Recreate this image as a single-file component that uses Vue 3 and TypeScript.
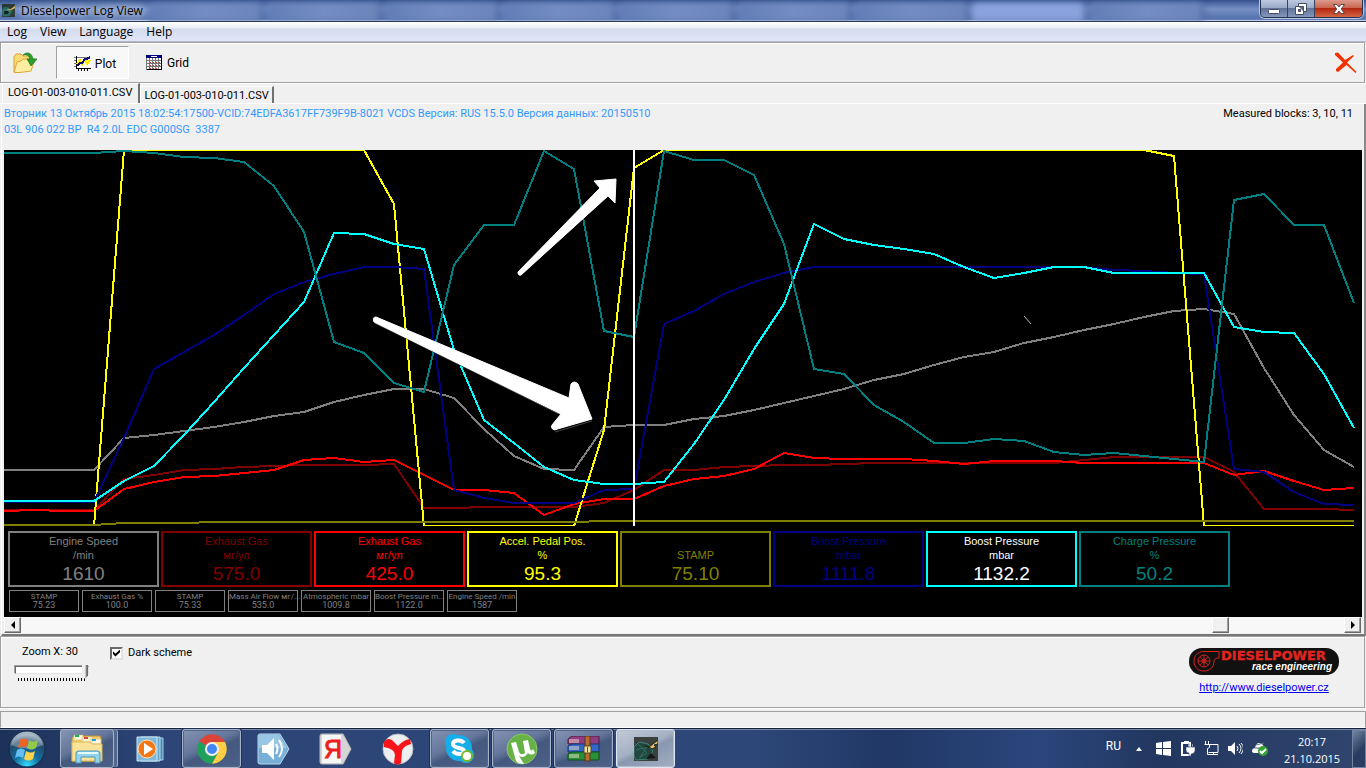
<script setup lang="ts">
import { computed, ref } from 'vue'

interface Series { name: string; color: string; points: number[] }
interface Channel { name: string; unit: string; value: string; color: string; text?: string }

const zoom = ref(30)
const dark = ref(true)
const activeTab = ref(0)
const files = ['LOG-01-003-010-011.CSV', 'LOG-01-003-010-011.CSV']
const menus = ['Log', 'View', 'Language', 'Help']

const fill = (value: number, count: number): number[] => Array.from({ length: count }, () => value)

const series: Series[] = [
  { name: 'engine', color: '#808080', points: [470, 470, 470, 470, 438, 435, 431, 427, 422, 416, 412, 402, 395, 389, 389, 398, 429, 456, 469, 470, 427, 425, 425, 419, 416, 410, 403, 396, 389, 380, 374, 365, 357, 352, 343, 337, 330, 324, 317, 311, 309, 314, 368, 415, 450, 467] },
  { name: 'gas1', color: '#800000', points: [510, 510, 510, 510, 479, 475, 470, 469, 467, 466, 465, 465, 465, 464, 508, 508, 507, 507, 507, 507, 503, 490, 470, 470, 467, 466, 465, 465, 464, 463, 463, 463, 463, 463, 463, 463, 460, 457, 457, 457, 457, 472, 509, 509, 509, 510] },
  { name: 'gas2', color: '#ff0000', points: [511, 510, 511, 511, 489, 482, 477, 476, 473, 470, 460, 458, 462, 460, 475, 490, 490, 493, 515, 504, 499, 499, 486, 479, 476, 469, 453, 458, 459, 459, 459, 461, 464, 461, 461, 461, 463, 463, 463, 463, 463, 475, 471, 481, 490, 488] },
  { name: 'pedal', color: '#ffff00', points: [...fill(526, 4), ...fill(150, 9), 204, ...fill(526, 6), 430, 168, ...fill(150, 17), 156, ...fill(526, 6)] },
  { name: 'stamp', color: '#808000', points: [...fill(525, 4), 523, 523, 523, ...fill(522, 13), ...fill(521, 26)] },
  { name: 'boost1', color: '#000080', points: [502, 502, 502, 502, 438, 369, 352, 335, 315, 294, 282, 274, 267, 267, 269, 490, 498, 503, 503, 503, 490, 489, 324, 311, 294, 282, 273, ...fill(267, 10), 270, 271, 273, 274, 469, 472, 492, 504, 505] },
  { name: 'boost2', color: '#00ffff', points: [501, 501, 501, 501, 481, 466, 435, 402, 368, 335, 302, 233, 234, 244, 249, 350, 420, 443, 467, 480, 484, 484, 482, 444, 400, 349, 304, 224, 239, 245, 249, 254, 267, 278, 273, 267, 267, 273, 273, 273, 273, 327, 332, 333, 374, 428] },
  { name: 'charge', color: '#008080', points: [153, 153, 153, 153, 151, 153, 157, 158, 162, 186, 232, 342, 353, 383, 392, 265, 225, 225, 151, 169, 331, 337, 151, 160, 160, 175, 244, 369, 374, 405, 422, 443, 443, 439, 441, 452, 455, 453, 456, 459, 462, 200, 194, 225, 225, 303] },
]

const lines = computed(() =>
  series.map((s) => ({ ...s, path: s.points.map((y, i) => `${i * zoom.value},${y - 150}`).join(' ') })),
)

const channels: Channel[] = [
  { name: 'Engine Speed', unit: '/min', value: '1610', color: '#808080' },
  { name: 'Exhaust Gas', unit: 'мг/ул', value: '575.0', color: '#800000' },
  { name: 'Exhaust Gas', unit: 'мг/ул', value: '425.0', color: '#ff0000' },
  { name: 'Accel. Pedal Pos.', unit: '%', value: '95.3', color: '#ffff00' },
  { name: '', unit: 'STAMP', value: '75.10', color: '#808000' },
  { name: 'Boost Pressure', unit: 'mbar', value: '1111.8', color: '#000080' },
  { name: 'Boost Pressure', unit: 'mbar', value: '1132.2', color: '#00ffff', text: '#ffffff' },
  { name: 'Charge Pressure', unit: '%', value: '50.2', color: '#008080' },
]

const minor = [
  ['STAMP', '75.23'],
  ['Exhaust Gas %', '100.0'],
  ['STAMP', '75.33'],
  ['Mass Air Flow мг/...', '535.0'],
  ['Atmospheric mbar', '1009.8'],
  ['Boost Pressure m...', '1122.0'],
  ['Engine Speed /min', '1587'],
]
</script>

<template>
  <div class="screen">
    <header class="title">
      <svg class="app-icon" width="13" height="13" viewBox="0 0 24 24">
        <rect width="24" height="24" fill="#2c3836" />
        <path d="M0 10 5 5l9 2 5 7-5 8-12 1-2-4z" fill="#2a6a62" />
        <path d="m10 9 5 1 9-7v5l-5 2-4 2-5-1z" fill="#d2b65a" />
        <path d="M3 12h8l3 4-4 4H3z" fill="#102420" stroke="#4aa08e" />
      </svg>
      <h1>Dieselpower Log View</h1>
      <div class="ghost-tabs"><i></i><i></i><i></i><i></i><i></i><i></i><i></i><i class="lit"></i><i></i></div>
      <div class="controls">
        <button type="button" aria-label="Minimize">
          <svg width="14" height="12" viewBox="0 0 14 12"><rect x="1.500" y="6.500" width="11" height="4" rx="1" fill="#fff" stroke="#454d60" /></svg>
        </button>
        <button type="button" aria-label="Restore">
          <svg width="14" height="14" viewBox="0 0 14 14"><path d="M4.500 1.500h8v8h-3v3h-8v-8h3z" fill="#fff" stroke="#454d60" /><path d="M4.500 4.500h5v5M4.500 7.500h2v2h-2z" fill="#647190" stroke="#454d60" /></svg>
        </button>
        <button type="button" class="close" aria-label="Close">
          <svg width="14" height="12" viewBox="0 0 14 12"><path d="M1.500 1.500h3.500l2 2.500 2-2.500h3.500L9.300 6l3.200 4.500H9L7 8l-2 2.500H1.500L4.700 6z" fill="#fff" stroke="#5a4248" /></svg>
        </button>
      </div>
    </header>

    <nav class="menu"><button v-for="m in menus" :key="m" type="button">{{ m }}</button></nav>

    <div class="toolbar">
      <button type="button" class="open" aria-label="Open log">
        <svg width="24" height="22" viewBox="0 0 24 22">
          <path d="M1 20V4.500L3 2h5l2 2h7l1 2v3" fill="#f8dc75" stroke="#d9a02c" />
          <path d="M1 20.500 4 10l4-1 2-2h12l-4 12-11 1.500z" fill="#ffeea2" stroke="#dca63a" />
          <path d="M10 3c4-4 9-2 10 4h4l-6 7-4-7h3c-1-4-4-5-7-4z" fill="#2b9e2b" stroke="#14761c" stroke-width=".7" />
        </svg>
      </button>
      <button type="button" class="mode pressed">
        <svg width="17" height="17" viewBox="0 0 17 17" shape-rendering="crispEdges">
          <rect x="2" y="1" width="14" height="12" fill="#fff" />
          <path d="M0 2.500h16M0 5.500h3M0 8.500h3M0 11.500h3" stroke="#777" />
          <path d="M2.500 1v12.500H17M4.500 14v2M7.500 14v2M10.500 14v2M13.500 14v2" stroke="#000" fill="none" />
          <path d="m3 9 3-4 2 5 3-6 2 5 3-4" stroke="#ffe900" stroke-width="2" fill="none" />
          <path d="m3 11 3-3h2l3-4h2l3-2" stroke="#111170" stroke-width="2" fill="none" />
        </svg>
        Plot
      </button>
      <button type="button" class="mode">
        <svg width="17" height="16" viewBox="0 0 17 16" shape-rendering="crispEdges">
          <rect width="16" height="15" fill="#fff" /><rect width="16" height="3" fill="#000080" /><path d="M5 1h6" stroke="#fff" />
          <path d="M0 5.500h15M0 8.500h15M0 11.500h15M.500 3v12M3.500 3v12M6.500 3v12M9.500 3v12M12.500 3v12" stroke="#777" />
          <path d="M4 7h11M4 10h11M4 13h8" stroke="#e02020" stroke-dasharray="1 2" /><path d="M15.500 0v14.500H1" fill="none" stroke="#000" />
        </svg>
        Grid
      </button>
      <button type="button" class="delete" aria-label="Close log">
        <svg width="24" height="22" viewBox="0 0 24 22"><path d="m1 1 3-.5 7 7.500 8-5 1 1-7 6.500L22.500 20l-1 1-9-8L4 20l-2-1v-2l7-6.500L1 3z" fill="#f23200" /></svg>
      </button>
    </div>

    <div class="tabs" role="tablist">
      <button v-for="(f, i) in files" :key="i" type="button" role="tab" :aria-selected="activeTab === i" :class="{ active: activeTab === i }" @click="activeTab = i">{{ f }}</button>
    </div>

    <main class="page">
      <div class="info">
        <p>Вторник 13 Октябрь 2015 18:02:54:17500-VCID:74EDFA3617FF739F9B-8021 VCDS Версия: RUS 15.5.0 Версия данных: 20150510<br />03L 906 022 BP&nbsp; R4 2.0L EDC G000SG&nbsp; 3387</p>
        <span>Measured blocks: 3, 10, 11</span>
      </div>

      <section class="plot">
        <svg class="chart" viewBox="0 0 1358 376" preserveAspectRatio="none" role="img" aria-label="Log plot">
          <g fill="none" stroke-width="2" shape-rendering="crispEdges">
            <polyline v-for="l in lines" :key="l.name" :points="l.path" :stroke="l.color" vector-effect="non-scaling-stroke" />
            <path d="M630 0v376" stroke="#fff" />
          </g>
          <g fill="#fff" stroke="#fff" stroke-linejoin="round">
            <path d="m516 125 87-80" fill="none" stroke="#555" stroke-width="2" />
            <path d="m514 122 82-84-6-7 22-2-1 24-7-7-87 79q-3 1-3-3z" />
            <path d="m371 173 186 92M551 282l37-11" fill="none" stroke="#444" />
            <path d="m372 167 193 81 2-14q3-4 7 0l14 35-38 11q-4-2-2-5l9-11-187-92q-2-5 2-5z" />
          </g>
          <path d="m1020 166 7 8" stroke="#bbb" />
        </svg>
        <div class="readouts">
          <div v-for="(c, i) in channels" :key="i" class="readout" :style="{ borderColor: c.color, color: c.text ?? c.color }">
            <span>{{ c.name }}</span><span>{{ c.unit }}</span><strong>{{ c.value }}</strong>
          </div>
        </div>
        <div class="minors">
          <div v-for="(m, i) in minor" :key="i" class="minor"><span>{{ m[0] }}</span><b>{{ m[1] }}</b></div>
        </div>
      </section>

      <div class="scroll">
        <button type="button" aria-label="Scroll left"><svg width="4" height="8" viewBox="0 0 4 8"><path d="M4 0v8L0 4z" /></svg></button>
        <div class="before"></div>
        <button type="button" aria-label="Scroll position"></button>
        <div class="after"></div>
        <button type="button" aria-label="Scroll right"><svg width="4" height="8" viewBox="0 0 4 8"><path d="M0 0v8l4-4z" /></svg></button>
      </div>
    </main>

    <section class="settings">
      <div class="zoom">
        <label for="zoom">Zoom X: {{ zoom }}</label>
        <input id="zoom" v-model.number="zoom" type="range" min="2" max="30" />
        <div class="ticks"></div>
      </div>
      <label class="scheme"><input v-model="dark" type="checkbox" />Dark scheme</label>
      <div class="brand">
        <svg width="150" height="27" viewBox="0 0 150 27">
          <rect width="150" height="27" rx="13" fill="#111" />
          <g fill="none" stroke="#d9211e">
            <circle cx="15" cy="13" r="6" />
            <circle cx="15" cy="13" r="2" />
            <path d="M15 7v12M9 13h12M11 9l8 8M19 9l-8 8" stroke-width=".8" />
            <path d="M30 3.500H15C8 3.500 5 8 5 13c0 6 4 10 10 10s10-4 10-10q0-3 5-3z" />
          </g>
          <text x="32" y="12" class="logo-name">DIESELPOWER</text>
          <text x="143" y="22" text-anchor="end" class="logo-sub">race engineering</text>
        </svg>
        <a href="http://www.dieselpower.cz">http://www.dieselpower.cz</a>
      </div>
    </section>

    <div class="status"></div>

    <footer class="taskbar">
      <button type="button" class="start" aria-label="Start">
        <svg width="38" height="38" viewBox="0 0 38 38">
          <defs><radialGradient id="orb" cx=".5" cy=".95" r=".9"><stop offset="0" stop-color="#35dcff" /><stop offset=".4" stop-color="#126a9c" /><stop offset=".75" stop-color="#244a6a" /><stop offset="1" stop-color="#a6bac9" /></radialGradient></defs>
          <circle cx="19" cy="19" r="18" fill="url(#orb)" stroke="#122744" />
          <path d="M3 15C6 0 32 0 35 15q-16 7-32 0z" fill="#fff" opacity=".3" />
          <path d="M12 10q4-3 8 0l-2 8q-4-3-8 0z" fill="#ef6425" /><path d="M21 10q5 3 9 0l-2 8q-5 3-9 0z" fill="#92c94b" />
          <path d="M9 20q4-3 8 0l-2 8q-4-3-8 0z" fill="#62bff1" /><path d="M18 21q5 3 9 0l-2 8q-5 3-9 0z" fill="#ffd24c" />
        </svg>
      </button>
      <button type="button" class="task open-task stacked" aria-label="Explorer">
        <svg width="34" height="32" viewBox="0 0 34 32">
          <path d="M2 28V5l2-2h26l1 2v23z" fill="#efcf70" stroke="#b99137" />
          <path d="M4 2h9v5H4zM12 4h10v5H12zM20 6h11v5H20z" fill="#fff8dc" stroke="#d4b25c" stroke-width=".5" /><path d="M5 2h4v2H5z" fill="#10b35b" /><path d="M14 4h4v2h-4z" fill="#dc4837" /><path d="M22 6h4v2h-4z" fill="#299edb" />
          <path d="M2 9h18l2 2h10v17H2z" fill="#f8e399" stroke="#dcb957" />
          <path d="M6 30V20q0-2 3-2h18q3 0 3 2v10h-5v-6H11v6z" fill="#91d4ec" stroke="#5298bd" /><path d="M8 20h20" stroke="#e5faff" stroke-width="2" />
        </svg>
      </button>
      <button type="button" class="task" aria-label="Media player">
        <svg width="28" height="26" viewBox="0 0 28 26"><path d="M8 2h19v22H8z" fill="#4a88b5" stroke="#a2d1e8" /><path d="M5 1h19v24H5z" fill="#6aa9cd" stroke="#b5ddef" /><path d="M1 1h20v24H1z" fill="#81b7d9" stroke="#cbe8f5" /><circle cx="11" cy="13" r="9" fill="#f47716" stroke="#ffe2bd" /><path d="m8 7 9 6-9 6z" fill="#fff" /></svg>
      </button>
      <button type="button" class="task open-task" aria-label="Chrome">
        <svg width="30" height="30" viewBox="0 0 30 30"><path d="M15 15 2.300 7.500A14.700 14.700 0 0 1 27.700 7.500z" fill="#dc4437" /><path d="M2.300 7.500A14.700 14.700 0 0 0 15 29.700l6-11z" fill="#20a05b" /><path d="M15 8h13A14.700 14.700 0 0 1 15 29.700l6-11z" fill="#ffce46" /><circle cx="15" cy="15" r="7" fill="#f2f2f2" /><circle cx="15" cy="15" r="5" fill="#4285f4" /></svg>
      </button>
      <button type="button" class="task" aria-label="Sound">
        <svg width="34" height="32" viewBox="0 0 34 32"><path d="M3 1h20l9 15-9 15H3q-2 0-2-2V3q0-2 2-2z" fill="#78afd7" stroke="#b4d8ed" /><path d="M2 2h20l8 13H2z" fill="#b0d5ee" opacity=".6" /><path d="M5 12h5l7-7v22l-7-7H5z" fill="#fff" /><path d="M19 11q3 5 0 10M22 7q6 9 0 17" stroke="#fff" stroke-width="2" fill="none" /></svg>
      </button>
      <button type="button" class="task" aria-label="Yandex">
        <svg width="34" height="32" viewBox="0 0 34 32"><path d="M3 1h21l8 15-8 15H3q-2 0-2-2V3q0-2 2-2z" fill="#d5d5d5" stroke="#bcbcbc" /><path d="M3 2h19v28H3z" fill="#f7f7f7" /><text x="5" y="25" class="ya">Я</text></svg>
      </button>
      <button type="button" class="task" aria-label="Yandex Browser">
        <svg width="32" height="32" viewBox="0 0 32 32"><circle cx="16" cy="16" r="15" fill="#eceeef" stroke="#b4bcc5" /><path d="M2 9q3-5 8-2l6 6q5-6 12-7l1 5q-8 2-9 7l-1 12q-4 3-7 0l1-8q0-6-11-8z" fill="#f81419" /></svg>
      </button>
      <button type="button" class="task open-task" aria-label="Skype">
        <svg width="31" height="31" viewBox="0 0 31 31"><circle cx="15" cy="15" r="13" fill="#16aee9" /><circle cx="9" cy="9" r="8" fill="#16aee9" /><circle cx="22" cy="22" r="8" fill="#16aee9" /><path d="M20 10c-3-4-11-3-11 1 0 5 11 3 11 7 0 4-8 4-11 0" fill="none" stroke="#fff" stroke-width="4" /><circle cx="23" cy="23" r="5" fill="#fff" stroke="#79b928" stroke-width="2" /></svg>
      </button>
      <button type="button" class="task open-task" aria-label="uTorrent">
        <svg width="32" height="32" viewBox="0 0 32 32"><circle cx="16" cy="16" r="15" fill="#68b147" stroke="#8bc96b" /><path d="m5 10 5-1 3 10q2 4 6 1l-2-12 5-1 2 9q1 3 3 0l2 4q-4 3-7 0-4 6-9 3l5 8q-6 0-8-3z" fill="#fff" /></svg>
      </button>
      <button type="button" class="task open-task" aria-label="WinRAR">
        <svg width="33" height="26" viewBox="0 0 33 26">
          <path d="m1 3 4-3h27v8L28 9 1 8z" fill="#923b83" stroke="#45203d" /><path d="m1 10 4-2h27v8H1z" fill="#3266c7" stroke="#17366f" /><path d="m1 18 4-2h27v8H1z" fill="#289037" stroke="#144d20" />
          <path d="M2 4h10M2 6h10M2 11h10M2 13h10M2 19h10M2 21h10" stroke="#eee2c5" /><path d="M18 0h5v25h-5z" fill="#b66d30" stroke="#5b3719" /><rect x="17" y="10" width="7" height="7" fill="#eee0a0" stroke="#554225" /><path d="M20.500 11v5" stroke="#635026" />
        </svg>
      </button>
      <button type="button" class="task current" aria-label="Dieselpower Log View">
        <svg width="24" height="24" viewBox="0 0 24 24"><rect width="24" height="24" fill="#3a403e" /><path d="M0 10 5 5l9 2 5 7-5 8-12 1-2-4z" fill="#20473f" stroke="#3c8375" /><path d="m4 7 9 9-8 5M2 13l11-3-7 10" fill="none" stroke="#3d7b6f" stroke-width=".7" /><path d="m10 9 5 1 9-7v4l-4 1 2 2-4 2-3-2z" fill="#dfbd60" stroke="#242516" /><path d="m12 22 10-1-5-5z" fill="#161b1a" /></svg>
      </button>

      <div class="tray">
        <span>RU</span>
        <svg class="tray-up" width="6" height="4" viewBox="0 0 6 4"><path d="M0 4h6L3 0z" /></svg>
        <svg width="15" height="15" viewBox="0 0 15 15"><path d="m0 2 6-1v6H0zM7 1l8-1v7H7zM0 8h6v6l-6-1zM7 8h8v7l-8-1z" /></svg>
        <svg width="15" height="15" viewBox="0 0 15 15"><path d="M2 2h8v12H2zM4 0h4v2" fill="none" stroke="#fff" stroke-width="2" /><path d="M6 6h9v4q-1 3-4 3v2H9v-3q-3 0-3-3zM8 3h1v3H8zM12 3h1v3h-1z" stroke="#263d68" stroke-width=".5" /></svg>
        <svg width="15" height="15" viewBox="0 0 15 15"><path d="M5 3.500h9v8H4.500M6 13.500h8M9.500 11v3M1.500 0v3M4.500 0v3M.500 3.500h5v3l-2 1v6h3" fill="none" stroke="#fff" /></svg>
        <svg width="15" height="15" viewBox="0 0 15 15"><path d="M0 5h3l4-4v13l-4-4H0z" /><path d="M9 5q2 2 0 5M11 3q4 4 0 9M13 2q5 5 0 11" fill="none" stroke="#fff" /></svg>
        <svg width="16" height="15" viewBox="0 0 16 15"><path d="M3 7h9q-1-5-5-5Q4 2 3 7zM0 10q0-3 4-3l8 1v4H3q-3 0-3-2z" /><path d="M4 4 12 2M3 7h9" stroke="#5a6b88" /><circle cx="11" cy="10" r="5" fill="#34a42f" /><path d="m8 10 2 2 4-4" fill="none" stroke="#fff" stroke-width="2" /></svg>
      </div>
      <time>20:17<br />21.10.2015</time>
      <button type="button" class="desktop" aria-label="Show desktop"></button>
    </footer>
  </div>
</template>

<style>
body { margin: 0; }
</style>

<style scoped>
* { box-sizing: border-box; }
button { margin: 0; padding: 0; border: 0; background: none; font: inherit; color: inherit; }
svg { display: block; flex: none; }
.screen { display: flex; flex-direction: column; min-height: 100vh; background: #f0f0f0; color: #000; font: 11px/16px Roboto, "Liberation Sans", sans-serif; }

.title { position: relative; display: flex; align-items: center; gap: 6px; height: 22px; padding: 0 3px 0 2px; background: linear-gradient(#34508a 0, #526fa9 4px, #7690c4 9px, #5573ae 18px, #6580b8 20px); border-bottom: 1px solid #2e3a54; box-shadow: inset 0 -1px #c1cde7; overflow: hidden; }
.title h1 { z-index: 1; flex: none; margin: 0; font: 12px/20px "Open Sans", "Noto Sans", sans-serif; text-shadow: 0 0 6px #c5d0e8, 0 0 10px #c5d0e8, 0 0 14px #c5d0e8; }
.app-icon { z-index: 1; }
.ghost-tabs { display: flex; flex: 1; gap: 3px; height: 20px; padding-right: 50px; filter: blur(3px); }
.ghost-tabs i { flex: 1; align-self: flex-end; height: 18px; border-radius: 5px 5px 0 0; background: linear-gradient(90deg, #617db7, #738dc2, #6b85bb); border-right: 2px solid #3c568e; }
.ghost-tabs .lit { background: #8aa3de; }
.controls { z-index: 1; display: flex; align-self: flex-start; height: 18px; border: 1px solid #27324d; border-top: 0; border-radius: 0 0 5px 5px; overflow: hidden; box-shadow: 0 0 0 1px #b7c3df; }
.controls button { display: grid; place-items: center; width: 27px; background: linear-gradient(#bdc9df 0, #9baac8 45%, #5f7197 48%, #8397bd 100%); border-right: 1px solid #39445f; }
.controls .close { width: 47px; border: 0; background: linear-gradient(#dc9a8e 0, #ca6650 45%, #b2250e 48%, #d36443 100%); }

.menu { display: flex; height: 20px; background: linear-gradient(#fff 0, #e9edf6 6px, #d4dbed 7px, #e0e6f7 18px); border-bottom: 1px solid #b3bbcd; font: 12px/19px "Open Sans", "Noto Sans", sans-serif; }
.menu button { padding: 0 6px 0 7px; }

.toolbar { display: flex; align-items: center; height: 41px; margin-right: 1px; padding: 0 6px 0 12px; border: 1px solid #a0a0a0; box-shadow: inset 1px 1px #fff, 0 1px #fff; }
.mode { display: flex; align-items: center; justify-content: center; gap: 4px; width: 73px; height: 33px; padding-left: 4px; font-size: 12px; }
.open { margin-right: 19px; }
.pressed { background: #f8f8f8; border: 1px solid; border-color: #a0a0a0 #fff #fff #a0a0a0; padding: 2px 0 0 5px; }
.delete { margin-left: auto; }

.tabs { display: flex; align-items: flex-end; height: 21px; padding-left: 2px; border-bottom: 1px solid #fff; }
.tabs button { height: 17px; padding: 0 3px; border-right: 2px solid #707070; border-top: 1px solid #fff; border-left: 1px solid #fff; line-height: 15px; }
.tabs .active { height: 20px; padding: 0 6px 3px 5px; }

.page { display: flex; flex: 1; flex-direction: column; padding: 0 2px 1px 2px; border-left: 1px solid #fff; border-right: 2px solid #888; border-bottom: 2px solid #777; margin-left: 1px; }
.info { display: flex; justify-content: space-between; height: 46px; padding: 2px 9px 0 0; }
.info p { margin: 0; color: #3399ff; }
.plot { display: flex; flex: 1; flex-direction: column; padding-bottom: 5px; background: #000; font-family: "Liberation Sans", sans-serif; }
.chart { flex: 1 1 376px; width: 100%; min-height: 200px; }
.readouts { display: flex; gap: 2px; padding: 5px 4px 3px; }
.readout { display: grid; grid-template-rows: 14px 14px 24px; width: 151px; height: 56px; padding-top: 1px; border: 2px solid; font-size: 11px; line-height: 14px; text-align: center; }
.readout strong { font-weight: 400; font-size: 19px; line-height: 24px; }
.minors { display: flex; gap: 3px; padding-left: 5px; }
.minor { width: 70px; height: 22px; padding-top: 1px; border: 1px solid #808080; color: #808080; font: 8px/9px Roboto, "Liberation Sans", sans-serif; text-align: center; white-space: nowrap; }
.minor span, .minor b { display: block; font-weight: 400; }
.minor b { font-size: 9px; }

.scroll { display: flex; height: 16px; margin-right: 1px; background: #f8f8f8; }
.scroll button { display: grid; place-items: center; width: 17px; background: #f0f0f0; border: 1px solid; border-color: #fff #696969 #696969 #fff; box-shadow: inset -1px -1px #a0a0a0; }
.before { flex: 1192; }
.after { flex: 115; }

.settings { display: flex; height: 72px; margin-right: 1px; border: 1px solid #a0a0a0; box-shadow: inset 1px 1px #fff, 0 1px #fff; }
.zoom { display: flex; flex-direction: column; width: 74px; margin-left: 14px; padding-top: 7px; text-align: center; }
.zoom label { padding-right: 4px; }
.zoom input { width: 74px; height: 14px; margin: 3px 0 0; appearance: none; background: none; }
.zoom input::-webkit-slider-runnable-track { height: 8px; background: #fff; border: 1px solid; border-color: #696969 #e3e3e3 #e3e3e3 #696969; box-shadow: -1px -1px #a0a0a0; }
.zoom input::-webkit-slider-thumb { width: 6px; height: 14px; margin-top: -2px; appearance: none; background: linear-gradient(90deg, #eee 3px, #a0a0a0 4px, #696969 5px); clip-path: polygon(0 0, 100% 0, 100% 75%, 50% 100%, 0 75%); }
.ticks { height: 3px; margin: 1px 3px 0; background: repeating-linear-gradient(90deg, #000 0 1px, transparent 1px 3px); }
.scheme { display: flex; gap: 5px; height: 16px; margin: 8px 0 0 21px; align-items: center; }
.scheme input { width: 13px; height: 13px; margin: 0; appearance: none; background: #fff; border: 2px solid; border-color: #696969 #e3e3e3 #e3e3e3 #696969; }
.scheme input:checked::before { content: ""; display: block; width: 7px; height: 7px; margin: 1px; background: #000; clip-path: polygon(0 25%, 35% 60%, 100% 0, 100% 38%, 35% 100%, 0 65%); }
.brand { display: flex; flex-direction: column; align-items: center; gap: 5px; margin-left: auto; padding: 11px 25px 0 0; }
.brand a { color: #0000ee; text-decoration: underline; }
.logo-name { fill: #e0251f; stroke: #e0251f; stroke-width: .4px; font: bold 13px "DejaVu Sans", sans-serif; }
.logo-sub { fill: #fff; font: italic bold 10px "Liberation Sans", sans-serif; }
.status { height: 17px; margin-top: 3px; border: 1px solid #a0a0a0; border-bottom-color: #fff; }

.taskbar { display: flex; height: 40px; background: linear-gradient(90deg, #1c3158 0, #2d4577 12%, #2d4778 55%, #213866 65%, #2b467c 76%, #22375f 85%, #30466f 100%); border-top: 1px solid #17233d; box-shadow: inset 0 1px #788aaa; color: #fff; }
.start { display: grid; place-items: center; width: 54px; margin-right: 6px; }
.task { display: grid; place-items: center; width: 59px; margin-right: 3px; border: 1px solid transparent; border-radius: 3px; }
.open-task { border-color: #a7b3c9; box-shadow: inset 0 0 0 1px #53668a, 0 0 0 1px #1f3153; background: linear-gradient(155deg, #8494b4 0, #637599 42%, #45597f 55%, #4d6087 100%); }
.stacked { width: 54px; margin-right: 6px; box-shadow: 4px 0 0 -1px #536789, 5px 0 0 -1px #9cabc2; }
.current { border-color: #e0e6ef; background: linear-gradient(155deg, #c1cad7 0, #a4b0c3 45%, #8997af 55%, #a3afc2 100%); box-shadow: inset 0 0 0 1px #b1bdcd; }
.ya { fill: #ed1f1c; font: 25px "Liberation Sans", sans-serif; stroke: #ed1f1c; }
.tray { display: flex; align-items: center; gap: 9px; margin-left: auto; fill: #fff; }
.tray span { margin-right: 6px; padding-bottom: 6px; font-size: 12px; }
.tray-up { margin-right: 5px; }
time { width: 84px; padding: 4px 0 0 4px; text-align: center; font: 11px/17px "Open Sans", "Noto Sans", sans-serif; }
.desktop { width: 14px; margin-top: 1px; border: 1px solid #71829f; background: linear-gradient(135deg, #7284a1, #293d62 55%); }
</style>
